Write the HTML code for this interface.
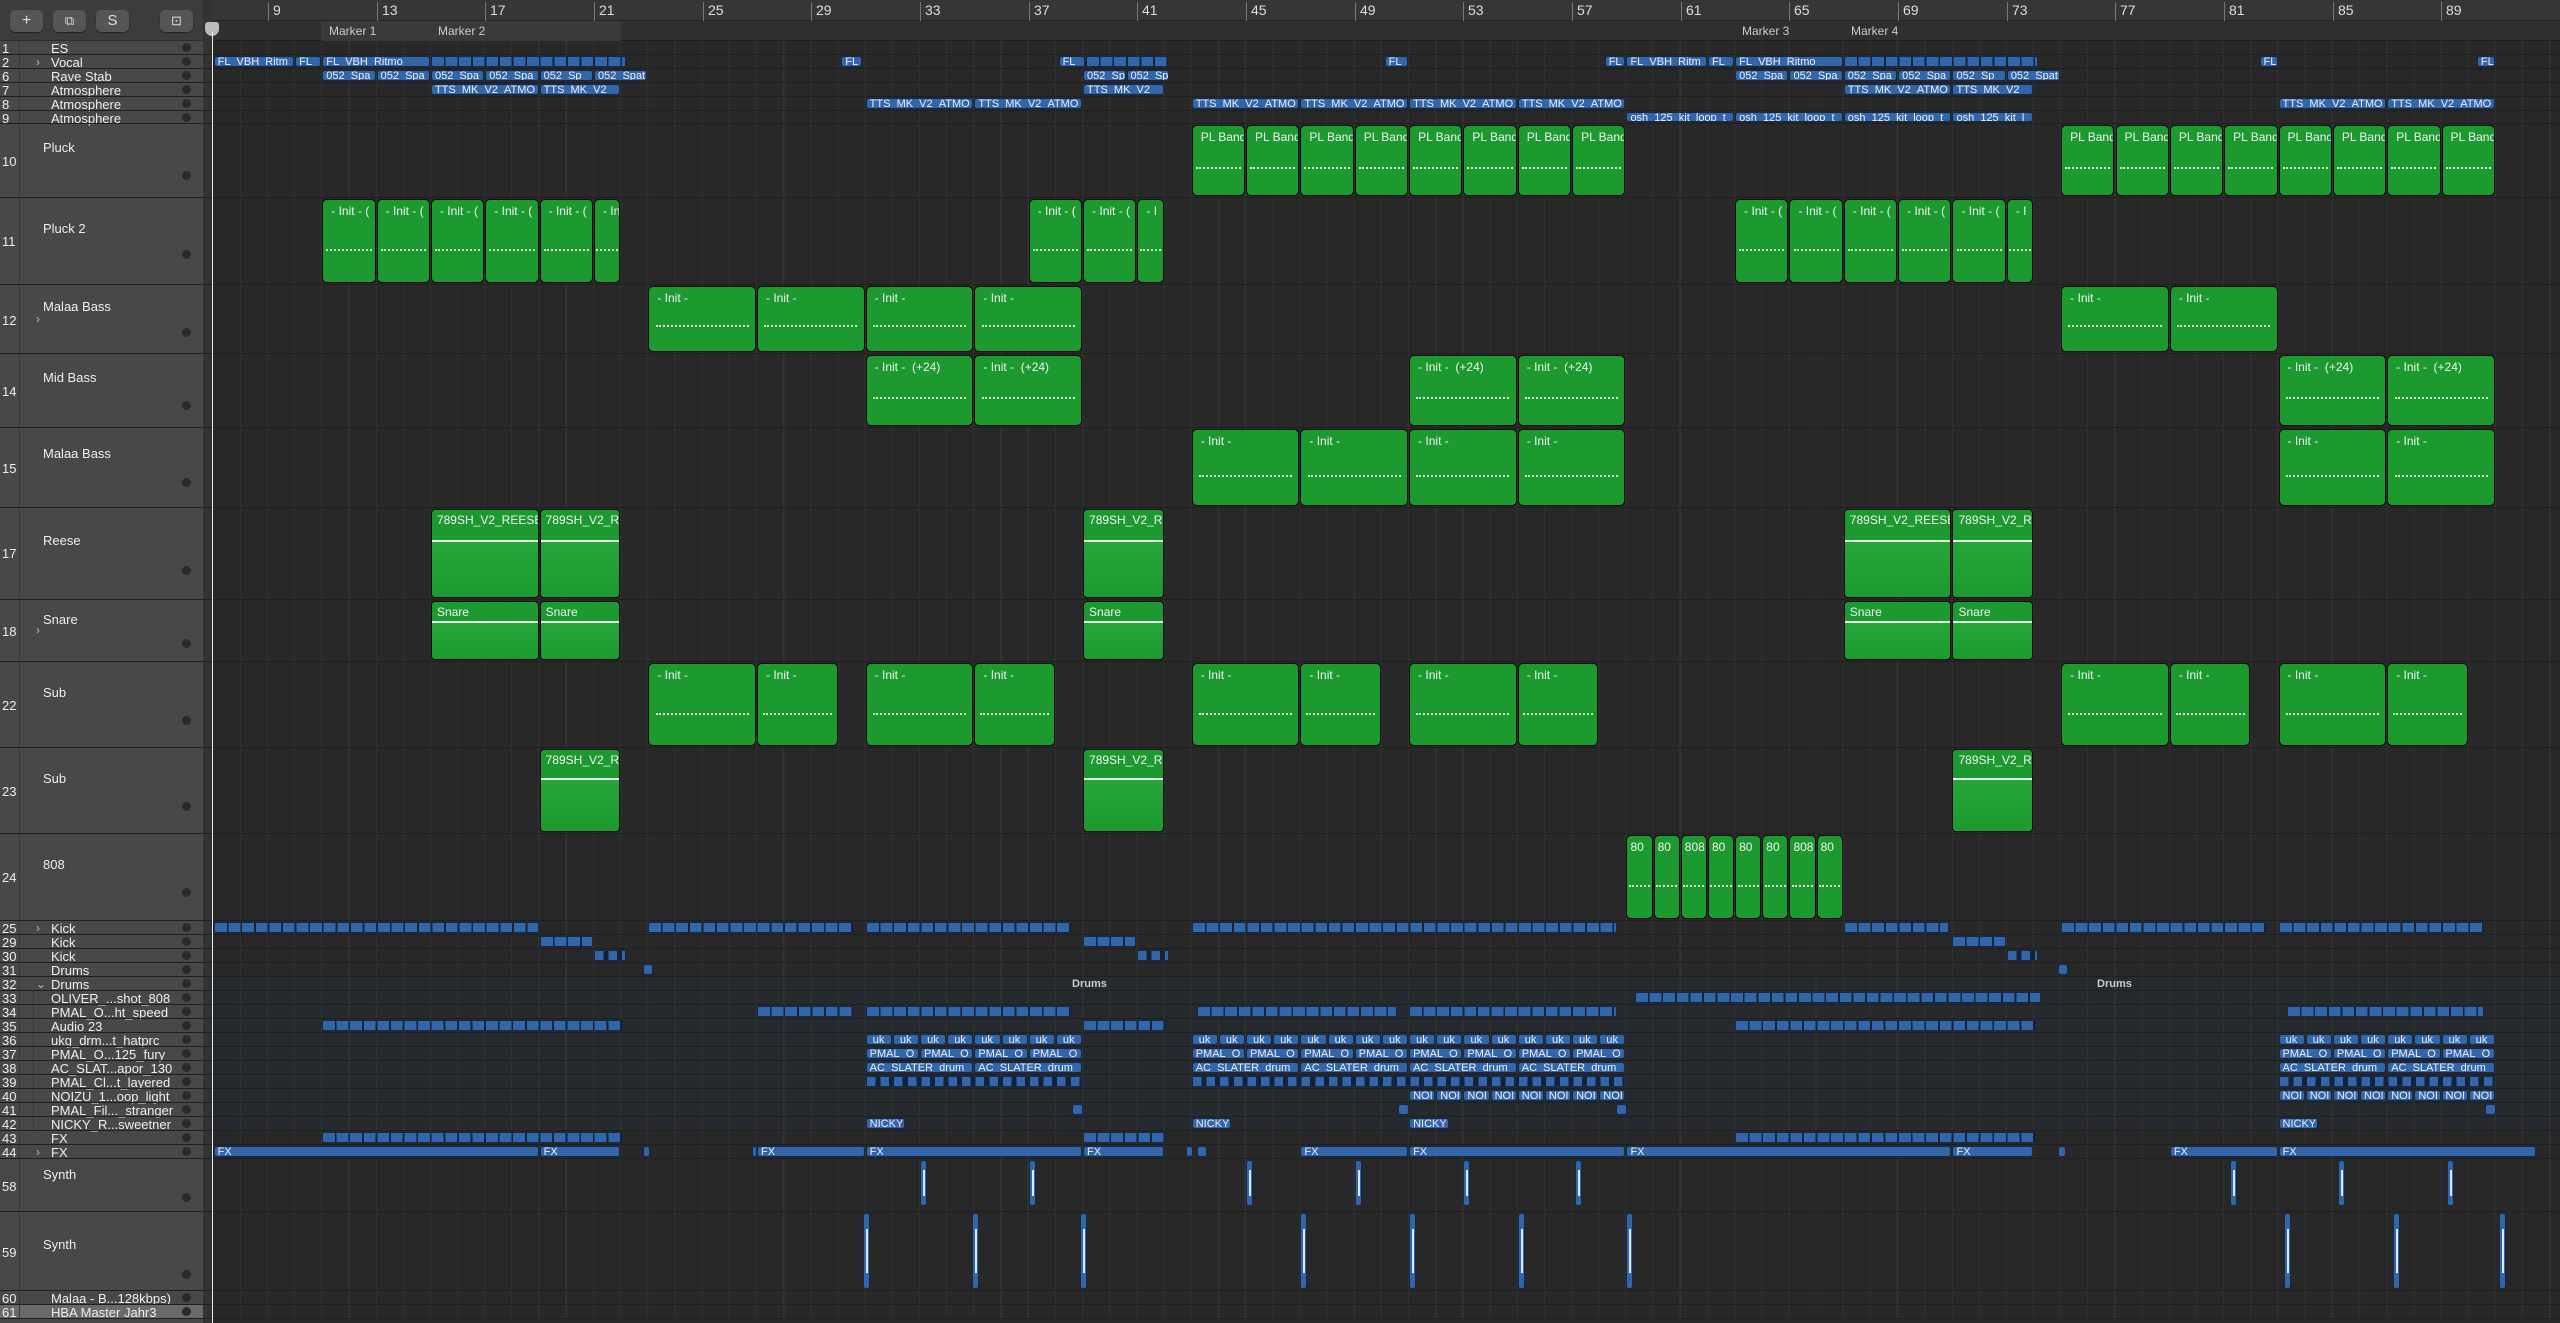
<!DOCTYPE html>
<html><head><meta charset="utf-8">
<style>
*{margin:0;padding:0;box-sizing:border-box}
body{width:2560px;height:1323px;background:#282828;overflow:hidden;font-family:"Liberation Sans",sans-serif;position:relative}
#left{position:absolute;left:0;top:0;width:203px;height:1323px;background:#484848}
#hdr{position:absolute;left:0;top:0;width:203px;height:41px;background:#3c3c3c;border-bottom:1px solid #2e2e2e}
.btn{position:absolute;top:10px;height:22px;width:33px;background:#555;border-radius:5px;color:#ddd;font-size:16px;text-align:center;line-height:22px;box-shadow:0 1px 1px #222}
.tr{position:absolute;left:0;width:203px;border-bottom:1px solid #3a3a3a;color:#eee;font-size:13px}
.tr .n{position:absolute;left:2px;width:18px;text-align:left;border-right:1px solid #3a3a3a;height:100%;top:0}
.tr .nm{position:absolute;left:51px;white-space:nowrap}
.tr .dot{position:absolute;left:182px;width:9px;height:9px;border-radius:50%;background:#2a2a2a}
.tr .ch{position:absolute;left:36px;color:#bbb;font-size:12px}
#div{position:absolute;left:203px;top:0;width:9px;height:1323px;background:#333}
#ruler1{position:absolute;left:212px;top:0;width:2348px;height:21px;background:#363636;border-bottom:1px solid #222}
#ruler2{position:absolute;left:212px;top:21px;width:2348px;height:20px;background:#2f2f2f;border-bottom:1px solid #1e1e1e}
.bn{position:absolute;top:2px;color:#ddd;font-size:14px;padding-left:4px;border-left:1px solid #777;height:19px}
.mk{position:absolute;top:22px;color:#ccc;font-size:12px;padding-left:8px;line-height:18px}
.grid{position:absolute;left:212px;top:41px;width:2348px;height:1278px;background:repeating-linear-gradient(90deg,transparent 0 1.4px,transparent 1.4px 26.17px,#343434 26.17px 27.17px);background-position:1.6px 0}
.row{position:absolute;left:0;width:2560px;border-bottom:1px solid #1f1f1f}
.r{position:absolute;left:calc(213.6px + (var(--b) - 7)*27.17px);width:calc(var(--w)*27.17px - 1px);top:1px;bottom:1px;overflow:hidden;white-space:nowrap;font-size:12px;color:#f2f2f2}
.g{background:#1c9a30;border:1.5px solid #0b0b0b;border-radius:5px;padding:4px 0 0 8px}
.g::after{content:"";position:absolute;left:6%;right:6%;top:60%;border-top:2px dotted rgba(255,255,255,.85)}
.a{background:#1c9a30;border:1.5px solid #0b0b0b;border-radius:4px;padding:3px 0 0 5px}
.a::after{content:"";position:absolute;left:0;right:0;top:34%;bottom:0;border-top:2px solid #e8f5e8;background:linear-gradient(180deg,#26a63a,#1c9a30)}
.bl{background:#3366a8;border:1px solid #142848;border-radius:3px;padding:0 0 0 3px;line-height:11px;font-size:11px;color:#eef}
.st{background:repeating-linear-gradient(90deg,#3366a8 0 11.8px,#13223a 11.8px 13.585px);border:1px solid #142848;border-radius:2px}
.st2{background:repeating-linear-gradient(90deg,#3366a8 0 8.5px,#13223a 8.5px 13.585px);border:1px solid #142848}
.sl{background:#3366a8;border:1px solid #142848;border-radius:3px;width:7px}
.sl::after{content:"";position:absolute;left:2px;top:20%;bottom:20%;width:2px;background:#dde8ff}
</style></head><body>
<div id="left">
<div id="hdr">
<div class="btn" style="left:10px">+</div>
<div class="btn" style="left:53px;font-size:13px">⧉</div>
<div class="btn" style="left:96px;font-size:15px">S</div>
<div class="btn" style="left:160px;font-size:13px">⊡</div>
</div>
<div class="tr" style="top:41px;height:14px"><span class="n">1</span><span class="nm">ES</span><span class="dot" style="top:2px"></span></div>
<div class="tr" style="top:55px;height:14px"><span class="n">2</span><span class="ch">›</span><span class="nm">Vocal</span><span class="dot" style="top:2px"></span></div>
<div class="tr" style="top:69px;height:14px"><span class="n">6</span><span class="nm">Rave Stab</span><span class="dot" style="top:2px"></span></div>
<div class="tr" style="top:83px;height:14px"><span class="n">7</span><span class="nm">Atmosphere</span><span class="dot" style="top:2px"></span></div>
<div class="tr" style="top:97px;height:14px"><span class="n">8</span><span class="nm">Atmosphere</span><span class="dot" style="top:2px"></span></div>
<div class="tr" style="top:111px;height:13px"><span class="n">9</span><span class="nm">Atmosphere</span><span class="dot" style="top:2px"></span></div>
<div class="tr" style="top:124px;height:74px"><span class="n" style="padding-top:30px">10</span><span class="nm" style="left:43px;top:16px">Pluck</span><span class="dot" style="top:47px"></span></div>
<div class="tr" style="top:198px;height:87px"><span class="n" style="padding-top:36px">11</span><span class="nm" style="left:43px;top:23px">Pluck 2</span><span class="dot" style="top:52px"></span></div>
<div class="tr" style="top:285px;height:69px"><span class="n" style="padding-top:28px">12</span><span class="ch" style="top:27px">›</span><span class="nm" style="left:43px;top:14px">Malaa Bass</span><span class="dot" style="top:43px"></span></div>
<div class="tr" style="top:354px;height:74px"><span class="n" style="padding-top:30px">14</span><span class="nm" style="left:43px;top:16px">Mid Bass</span><span class="dot" style="top:47px"></span></div>
<div class="tr" style="top:428px;height:80px"><span class="n" style="padding-top:33px">15</span><span class="nm" style="left:43px;top:18px">Malaa Bass</span><span class="dot" style="top:50px"></span></div>
<div class="tr" style="top:508px;height:92px"><span class="n" style="padding-top:38px">17</span><span class="nm" style="left:43px;top:25px">Reese</span><span class="dot" style="top:58px"></span></div>
<div class="tr" style="top:600px;height:62px"><span class="n" style="padding-top:24px">18</span><span class="ch" style="top:23px">›</span><span class="nm" style="left:43px;top:12px">Snare</span><span class="dot" style="top:39px"></span></div>
<div class="tr" style="top:662px;height:86px"><span class="n" style="padding-top:36px">22</span><span class="nm" style="left:43px;top:23px">Sub</span><span class="dot" style="top:54px"></span></div>
<div class="tr" style="top:748px;height:86px"><span class="n" style="padding-top:36px">23</span><span class="nm" style="left:43px;top:23px">Sub</span><span class="dot" style="top:54px"></span></div>
<div class="tr" style="top:834px;height:87px"><span class="n" style="padding-top:36px">24</span><span class="nm" style="left:43px;top:23px">808</span><span class="dot" style="top:54px"></span></div>
<div class="tr" style="top:921px;height:14px"><span class="n">25</span><span class="ch">›</span><span class="nm">Kick</span><span class="dot" style="top:2px"></span></div>
<div class="tr" style="top:935px;height:14px"><span class="n">29</span><span class="nm">Kick</span><span class="dot" style="top:2px"></span></div>
<div class="tr" style="top:949px;height:14px"><span class="n">30</span><span class="nm">Kick</span><span class="dot" style="top:2px"></span></div>
<div class="tr" style="top:963px;height:14px"><span class="n">31</span><span class="nm">Drums</span><span class="dot" style="top:2px"></span></div>
<div class="tr" style="top:977px;height:14px"><span class="n">32</span><span class="ch">⌄</span><span class="nm">Drums</span><span class="dot" style="top:2px"></span></div>
<div class="tr" style="top:991px;height:14px"><span class="n">33</span><span class="nm">OLIVER_...shot_808</span><span class="dot" style="top:2px"></span></div>
<div class="tr" style="top:1005px;height:14px"><span class="n">34</span><span class="nm">PMAL_O...ht_speed</span><span class="dot" style="top:2px"></span></div>
<div class="tr" style="top:1019px;height:14px"><span class="n">35</span><span class="nm">Audio 23</span><span class="dot" style="top:2px"></span></div>
<div class="tr" style="top:1033px;height:14px"><span class="n">36</span><span class="nm">ukg_drm...t_hatprc</span><span class="dot" style="top:2px"></span></div>
<div class="tr" style="top:1047px;height:14px"><span class="n">37</span><span class="nm">PMAL_O...125_fury</span><span class="dot" style="top:2px"></span></div>
<div class="tr" style="top:1061px;height:14px"><span class="n">38</span><span class="nm">AC_SLAT...apor_130</span><span class="dot" style="top:2px"></span></div>
<div class="tr" style="top:1075px;height:14px"><span class="n">39</span><span class="nm">PMAL_Cl...t_layered</span><span class="dot" style="top:2px"></span></div>
<div class="tr" style="top:1089px;height:14px"><span class="n">40</span><span class="nm">NOIZU_1...oop_light</span><span class="dot" style="top:2px"></span></div>
<div class="tr" style="top:1103px;height:14px"><span class="n">41</span><span class="nm">PMAL_Fil..._stranger</span><span class="dot" style="top:2px"></span></div>
<div class="tr" style="top:1117px;height:14px"><span class="n">42</span><span class="nm">NICKY_R...sweetner</span><span class="dot" style="top:2px"></span></div>
<div style="position:absolute;left:33px;top:991px;width:1px;height:140px;background:#3a3a3a"></div>
<div class="tr" style="top:1131px;height:14px"><span class="n">43</span><span class="nm">FX</span><span class="dot" style="top:2px"></span></div>
<div class="tr" style="top:1145px;height:14px"><span class="n">44</span><span class="ch">›</span><span class="nm">FX</span><span class="dot" style="top:2px"></span></div>
<div class="tr" style="top:1159px;height:53px"><span class="n" style="padding-top:20px">58</span><span class="nm" style="left:43px;top:8px">Synth</span><span class="dot" style="top:34px"></span></div>
<div class="tr" style="top:1212px;height:79px"><span class="n" style="padding-top:33px">59</span><span class="nm" style="left:43px;top:25px">Synth</span><span class="dot" style="top:58px"></span></div>
<div class="tr" style="top:1291px;height:14px"><span class="n">60</span><span class="nm">Malaa - B...128kbps)</span><span class="dot" style="top:2px"></span></div>
<div class="tr" style="top:1305px;height:14px;background:#6a6a6a"><span class="n">61</span><span class="nm">HBA Master Jahr3</span><span class="dot" style="top:2px"></span></div>
</div>
<div id="div"></div>

<div style="position:absolute;left:212px;top:977px;width:2348px;height:154px;background:#262a2e"></div>
<div class="grid"></div>
<div id="ruler1"></div>
<div id="ruler2"></div>
<div style="position:absolute;left:321px;top:21px;width:300px;height:20px;background:#3a3a3a"></div>
<div class="bn" style="left:268px">9</div><div class="bn" style="left:377px">13</div><div class="bn" style="left:485px">17</div><div class="bn" style="left:594px">21</div><div class="bn" style="left:703px">25</div><div class="bn" style="left:811px">29</div><div class="bn" style="left:920px">33</div><div class="bn" style="left:1029px">37</div><div class="bn" style="left:1137px">41</div><div class="bn" style="left:1246px">45</div><div class="bn" style="left:1355px">49</div><div class="bn" style="left:1463px">53</div><div class="bn" style="left:1572px">57</div><div class="bn" style="left:1681px">61</div><div class="bn" style="left:1789px">65</div><div class="bn" style="left:1898px">69</div><div class="bn" style="left:2007px">73</div><div class="bn" style="left:2115px">77</div><div class="bn" style="left:2224px">81</div><div class="bn" style="left:2333px">85</div><div class="bn" style="left:2441px">89</div>
<div class="mk" style="left:321px">Marker 1</div><div class="mk" style="left:430px">Marker 2</div><div class="mk" style="left:1734px">Marker 3</div><div class="mk" style="left:1843px">Marker 4</div>
<div style="position:absolute;left:205px;top:22px;width:14px;height:14px;background:#bbb;border-radius:3px 3px 7px 7px"></div>

<div class="row" style="top:41px;height:14px"></div>
<div class="row" style="top:55px;height:14px">
<div class="r bl" style="--b:7;--w:3">FL_VBH_Ritm</div><div class="r bl" style="--b:10;--w:1">FL</div><div class="r bl" style="--b:11;--w:4">FL_VBH_Ritmo_</div><div class="r st" style="--b:15;--w:7.2"></div>
<div class="r bl" style="--b:30.1;--w:0.8">FL</div><div class="r bl" style="--b:38.1;--w:1">FL</div><div class="r st" style="--b:39.1;--w:3.1"></div>
<div class="r bl" style="--b:50.1;--w:0.9">FL</div><div class="r bl" style="--b:58.2;--w:0.8">FL</div><div class="r bl" style="--b:59;--w:3">FL_VBH_Ritm</div><div class="r bl" style="--b:62;--w:1">FL</div><div class="r bl" style="--b:63;--w:4">FL_VBH_Ritmo_</div><div class="r st" style="--b:67;--w:7.2"></div>
<div class="r bl" style="--b:82.3;--w:0.7">FL</div><div class="r bl" style="--b:90.3;--w:0.7">FL</div>
</div>
<div class="row" style="top:69px;height:14px">
<div class="r bl" style="--b:11;--w:2">052_Spa</div><div class="r bl" style="--b:13;--w:2">052_Spa</div><div class="r bl" style="--b:15;--w:2">052_Spa</div><div class="r bl" style="--b:17;--w:2">052_Spa</div><div class="r bl" style="--b:19;--w:2">052_Sp</div><div class="r bl" style="--b:21;--w:2">052_Spat</div>
<div class="r bl" style="--b:39;--w:1.6">052_Sp</div><div class="r bl" style="--b:40.6;--w:1.6">052_Spa</div>
<div class="r bl" style="--b:63;--w:2">052_Spa</div><div class="r bl" style="--b:65;--w:2">052_Spa</div><div class="r bl" style="--b:67;--w:2">052_Spa</div><div class="r bl" style="--b:69;--w:2">052_Spa</div><div class="r bl" style="--b:71;--w:2">052_Sp</div><div class="r bl" style="--b:73;--w:2">052_Spat</div>
</div>
<div class="row" style="top:83px;height:14px">
<div class="r bl" style="--b:15;--w:4">TTS_MK_V2_ATMO</div><div class="r bl" style="--b:19;--w:3">TTS_MK_V2_</div><div class="r bl" style="--b:39;--w:3">TTS_MK_V2_</div><div class="r bl" style="--b:67;--w:4">TTS_MK_V2_ATMO</div><div class="r bl" style="--b:71;--w:3">TTS_MK_V2_</div>
</div>
<div class="row" style="top:97px;height:14px">
<div class="r bl" style="--b:31;--w:4">TTS_MK_V2_ATMO</div><div class="r bl" style="--b:35;--w:4">TTS_MK_V2_ATMO</div><div class="r bl" style="--b:43;--w:4">TTS_MK_V2_ATMO</div><div class="r bl" style="--b:47;--w:4">TTS_MK_V2_ATMO</div><div class="r bl" style="--b:51;--w:4">TTS_MK_V2_ATMO</div><div class="r bl" style="--b:55;--w:4">TTS_MK_V2_ATMO</div><div class="r bl" style="--b:83;--w:4">TTS_MK_V2_ATMO</div><div class="r bl" style="--b:87;--w:4">TTS_MK_V2_ATMO</div>
</div>
<div class="row" style="top:111px;height:13px">
<div class="r bl" style="--b:59;--w:4">osh_125_kit_loop_t</div><div class="r bl" style="--b:63;--w:4">osh_125_kit_loop_t</div><div class="r bl" style="--b:67;--w:4">osh_125_kit_loop_t</div><div class="r bl" style="--b:71;--w:3">osh_125_kit_l</div>
</div>
<div class="row" style="top:124px;height:74px">
<div class="r g" style="--b:43;--w:2">PL Bandi</div><div class="r g" style="--b:45;--w:2">PL Bandi</div><div class="r g" style="--b:47;--w:2">PL Bandi</div><div class="r g" style="--b:49;--w:2">PL Bandi</div><div class="r g" style="--b:51;--w:2">PL Bandi</div><div class="r g" style="--b:53;--w:2">PL Bandi</div><div class="r g" style="--b:55;--w:2">PL Bandi</div><div class="r g" style="--b:57;--w:2">PL Bandi</div>
<div class="r g" style="--b:75;--w:2">PL Bandi</div><div class="r g" style="--b:77;--w:2">PL Bandi</div><div class="r g" style="--b:79;--w:2">PL Bandi</div><div class="r g" style="--b:81;--w:2">PL Bandi</div><div class="r g" style="--b:83;--w:2">PL Bandi</div><div class="r g" style="--b:85;--w:2">PL Bandi</div><div class="r g" style="--b:87;--w:2">PL Bandi</div><div class="r g" style="--b:89;--w:2">PL Bandi</div>
</div>
<div class="row" style="top:198px;height:87px">
<div class="r g" style="--b:11;--w:2">- Init - (</div><div class="r g" style="--b:13;--w:2">- Init - (</div><div class="r g" style="--b:15;--w:2">- Init - (</div><div class="r g" style="--b:17;--w:2">- Init - (</div><div class="r g" style="--b:19;--w:2">- Init - (</div><div class="r g" style="--b:21;--w:1">- In</div>
<div class="r g" style="--b:37;--w:2">- Init - (</div><div class="r g" style="--b:39;--w:2">- Init - (</div><div class="r g" style="--b:41;--w:1">- I</div>
<div class="r g" style="--b:63;--w:2">- Init - (</div><div class="r g" style="--b:65;--w:2">- Init - (</div><div class="r g" style="--b:67;--w:2">- Init - (</div><div class="r g" style="--b:69;--w:2">- Init - (</div><div class="r g" style="--b:71;--w:2">- Init - (</div><div class="r g" style="--b:73;--w:1">- I</div>
</div>
<div class="row" style="top:285px;height:69px">
<div class="r g" style="--b:23;--w:4">- Init -</div><div class="r g" style="--b:27;--w:4">- Init -</div><div class="r g" style="--b:31;--w:4">- Init -</div><div class="r g" style="--b:35;--w:4">- Init -</div><div class="r g" style="--b:75;--w:4">- Init -</div><div class="r g" style="--b:79;--w:4">- Init -</div>
</div>
<div class="row" style="top:354px;height:74px">
<div class="r g" style="--b:31;--w:4">- Init -&nbsp; (+24)</div><div class="r g" style="--b:35;--w:4">- Init -&nbsp; (+24)</div><div class="r g" style="--b:51;--w:4">- Init -&nbsp; (+24)</div><div class="r g" style="--b:55;--w:4">- Init -&nbsp; (+24)</div><div class="r g" style="--b:83;--w:4">- Init -&nbsp; (+24)</div><div class="r g" style="--b:87;--w:4">- Init -&nbsp; (+24)</div>
</div>
<div class="row" style="top:428px;height:80px">
<div class="r g" style="--b:43;--w:4">- Init -</div><div class="r g" style="--b:47;--w:4">- Init -</div><div class="r g" style="--b:51;--w:4">- Init -</div><div class="r g" style="--b:55;--w:4">- Init -</div><div class="r g" style="--b:83;--w:4">- Init -</div><div class="r g" style="--b:87;--w:4">- Init -</div>
</div>
<div class="row" style="top:508px;height:92px">
<div class="r a" style="--b:15;--w:4">789SH_V2_REESE_</div><div class="r a" style="--b:19;--w:3">789SH_V2_RE</div><div class="r a" style="--b:39;--w:3">789SH_V2_RE</div><div class="r a" style="--b:67;--w:4">789SH_V2_REESE_</div><div class="r a" style="--b:71;--w:3">789SH_V2_RE</div>
</div>
<div class="row" style="top:600px;height:62px">
<div class="r a" style="--b:15;--w:4">Snare</div><div class="r a" style="--b:19;--w:3">Snare</div><div class="r a" style="--b:39;--w:3">Snare</div><div class="r a" style="--b:67;--w:4">Snare</div><div class="r a" style="--b:71;--w:3">Snare</div>
</div>
<div class="row" style="top:662px;height:86px">
<div class="r g" style="--b:23;--w:4">- Init -</div><div class="r g" style="--b:27;--w:3">- Init -</div><div class="r g" style="--b:31;--w:4">- Init -</div><div class="r g" style="--b:35;--w:3">- Init -</div><div class="r g" style="--b:43;--w:4">- Init -</div><div class="r g" style="--b:47;--w:3">- Init -</div><div class="r g" style="--b:51;--w:4">- Init -</div><div class="r g" style="--b:55;--w:3">- Init -</div><div class="r g" style="--b:75;--w:4">- Init -</div><div class="r g" style="--b:79;--w:3">- Init -</div><div class="r g" style="--b:83;--w:4">- Init -</div><div class="r g" style="--b:87;--w:3">- Init -</div>
</div>
<div class="row" style="top:748px;height:86px">
<div class="r a" style="--b:19;--w:3">789SH_V2_RE</div><div class="r a" style="--b:39;--w:3">789SH_V2_RE</div><div class="r a" style="--b:71;--w:3">789SH_V2_RE</div>
</div>
<div class="row" style="top:834px;height:87px">
<div class="r g" style="--b:59;--w:1;padding-left:3px">80</div><div class="r g" style="--b:60;--w:1;padding-left:3px">80</div><div class="r g" style="--b:61;--w:1;padding-left:3px">808</div><div class="r g" style="--b:62;--w:1;padding-left:3px">80</div><div class="r g" style="--b:63;--w:1;padding-left:3px">80</div><div class="r g" style="--b:64;--w:1;padding-left:3px">80</div><div class="r g" style="--b:65;--w:1;padding-left:3px">808</div><div class="r g" style="--b:66;--w:1;padding-left:3px">80</div>
</div>
<div class="row" style="top:921px;height:14px">
<div class="r st" style="--b:7;--w:12"></div><div class="r st" style="--b:23;--w:7.6"></div><div class="r st" style="--b:31;--w:7.6"></div><div class="r st" style="--b:43;--w:15.7"></div><div class="r st" style="--b:67;--w:3.9"></div><div class="r st" style="--b:75;--w:7.6"></div><div class="r st" style="--b:83;--w:7.6"></div>
</div>
<div class="row" style="top:935px;height:14px">
<div class="r st" style="--b:19;--w:2"></div><div class="r st" style="--b:39;--w:2"></div><div class="r st" style="--b:71;--w:2"></div>
</div>
<div class="row" style="top:949px;height:14px">
<div class="r st2" style="--b:21;--w:1.2"></div><div class="r st2" style="--b:41;--w:1.2"></div><div class="r st2" style="--b:73;--w:1.2"></div>
</div>
<div class="row" style="top:963px;height:14px">
<div class="r bl" style="--b:22.8;--w:0.4"></div><div class="r bl" style="--b:74.9;--w:0.4"></div>
</div>
<div class="row" style="top:977px;height:14px">
<div style="position:absolute;left:1072px;top:1px;font-size:11px;font-weight:bold;color:#ccc">Drums</div><div style="position:absolute;left:2097px;top:1px;font-size:11px;font-weight:bold;color:#ccc">Drums</div>
</div>
<div class="row" style="top:991px;height:14px"><div class="r st" style="--b:59.3;--w:15"></div></div>
<div class="row" style="top:1005px;height:14px">
<div class="r st" style="--b:27;--w:3.6"></div><div class="r st" style="--b:31;--w:7.6"></div><div class="r st" style="--b:43.2;--w:7.4"></div><div class="r st" style="--b:51;--w:7.7"></div><div class="r st" style="--b:83.3;--w:7.3"></div>
</div>
<div class="row" style="top:1019px;height:14px">
<div class="r st" style="--b:11;--w:11.1"></div><div class="r st" style="--b:39;--w:3.1"></div><div class="r st" style="--b:63;--w:11.1"></div>
</div>
<div class="row" style="top:1033px;height:14px">
<div class="r bl" style="--b:31;--w:1">&nbsp;uk</div><div class="r bl" style="--b:32;--w:1">&nbsp;uk</div><div class="r bl" style="--b:33;--w:1">&nbsp;uk</div><div class="r bl" style="--b:34;--w:1">&nbsp;uk</div><div class="r bl" style="--b:35;--w:1">&nbsp;uk</div><div class="r bl" style="--b:36;--w:1">&nbsp;uk</div><div class="r bl" style="--b:37;--w:1">&nbsp;uk</div><div class="r bl" style="--b:38;--w:1">&nbsp;uk</div>
<div class="r bl" style="--b:43;--w:1">&nbsp;uk</div><div class="r bl" style="--b:44;--w:1">&nbsp;uk</div><div class="r bl" style="--b:45;--w:1">&nbsp;uk</div><div class="r bl" style="--b:46;--w:1">&nbsp;uk</div><div class="r bl" style="--b:47;--w:1">&nbsp;uk</div><div class="r bl" style="--b:48;--w:1">&nbsp;uk</div><div class="r bl" style="--b:49;--w:1">&nbsp;uk</div><div class="r bl" style="--b:50;--w:1">&nbsp;uk</div><div class="r bl" style="--b:51;--w:1">&nbsp;uk</div><div class="r bl" style="--b:52;--w:1">&nbsp;uk</div><div class="r bl" style="--b:53;--w:1">&nbsp;uk</div><div class="r bl" style="--b:54;--w:1">&nbsp;uk</div><div class="r bl" style="--b:55;--w:1">&nbsp;uk</div><div class="r bl" style="--b:56;--w:1">&nbsp;uk</div><div class="r bl" style="--b:57;--w:1">&nbsp;uk</div><div class="r bl" style="--b:58;--w:1">&nbsp;uk</div>
<div class="r bl" style="--b:83;--w:1">&nbsp;uk</div><div class="r bl" style="--b:84;--w:1">&nbsp;uk</div><div class="r bl" style="--b:85;--w:1">&nbsp;uk</div><div class="r bl" style="--b:86;--w:1">&nbsp;uk</div><div class="r bl" style="--b:87;--w:1">&nbsp;uk</div><div class="r bl" style="--b:88;--w:1">&nbsp;uk</div><div class="r bl" style="--b:89;--w:1">&nbsp;uk</div><div class="r bl" style="--b:90;--w:1">&nbsp;uk</div>
</div>
<div class="row" style="top:1047px;height:14px">
<div class="r bl" style="--b:31;--w:2">PMAL_O</div><div class="r bl" style="--b:33;--w:2">PMAL_O</div><div class="r bl" style="--b:35;--w:2">PMAL_O</div><div class="r bl" style="--b:37;--w:2">PMAL_O</div>
<div class="r bl" style="--b:43;--w:2">PMAL_O</div><div class="r bl" style="--b:45;--w:2">PMAL_O</div><div class="r bl" style="--b:47;--w:2">PMAL_O</div><div class="r bl" style="--b:49;--w:2">PMAL_O</div><div class="r bl" style="--b:51;--w:2">PMAL_O</div><div class="r bl" style="--b:53;--w:2">PMAL_O</div><div class="r bl" style="--b:55;--w:2">PMAL_O</div><div class="r bl" style="--b:57;--w:2">PMAL_O</div>
<div class="r bl" style="--b:83;--w:2">PMAL_O</div><div class="r bl" style="--b:85;--w:2">PMAL_O</div><div class="r bl" style="--b:87;--w:2">PMAL_O</div><div class="r bl" style="--b:89;--w:2">PMAL_O</div>
</div>
<div class="row" style="top:1061px;height:14px">
<div class="r bl" style="--b:31;--w:4">AC_SLATER_drum_</div><div class="r bl" style="--b:35;--w:4">AC_SLATER_drum_</div><div class="r bl" style="--b:43;--w:4">AC_SLATER_drum_</div><div class="r bl" style="--b:47;--w:4">AC_SLATER_drum_</div><div class="r bl" style="--b:51;--w:4">AC_SLATER_drum_</div><div class="r bl" style="--b:55;--w:4">AC_SLATER_drum_</div><div class="r bl" style="--b:83;--w:4">AC_SLATER_drum_</div><div class="r bl" style="--b:87;--w:4">AC_SLATER_drum_</div>
</div>
<div class="row" style="top:1075px;height:14px">
<div class="r st2" style="--b:31;--w:8"></div><div class="r st2" style="--b:43;--w:16"></div><div class="r st2" style="--b:83;--w:8"></div>
</div>
<div class="row" style="top:1089px;height:14px">
<div class="r bl" style="--b:51;--w:1">NOI</div><div class="r bl" style="--b:52;--w:1">NOI</div><div class="r bl" style="--b:53;--w:1">NOI</div><div class="r bl" style="--b:54;--w:1">NOI</div><div class="r bl" style="--b:55;--w:1">NOI</div><div class="r bl" style="--b:56;--w:1">NOI</div><div class="r bl" style="--b:57;--w:1">NOI</div><div class="r bl" style="--b:58;--w:1">NOI</div>
<div class="r bl" style="--b:83;--w:1">NOI</div><div class="r bl" style="--b:84;--w:1">NOI</div><div class="r bl" style="--b:85;--w:1">NOI</div><div class="r bl" style="--b:86;--w:1">NOI</div><div class="r bl" style="--b:87;--w:1">NOI</div><div class="r bl" style="--b:88;--w:1">NOI</div><div class="r bl" style="--b:89;--w:1">NOI</div><div class="r bl" style="--b:90;--w:1">NOI</div>
</div>
<div class="row" style="top:1103px;height:14px">
<div class="r bl" style="--b:38.6;--w:0.45"></div><div class="r bl" style="--b:50.6;--w:0.45"></div><div class="r bl" style="--b:58.6;--w:0.45"></div><div class="r bl" style="--b:90.6;--w:0.45"></div>
</div>
<div class="row" style="top:1117px;height:14px">
<div class="r bl" style="--b:31;--w:1.5">NICKY</div><div class="r bl" style="--b:43;--w:1.5">NICKY</div><div class="r bl" style="--b:51;--w:1.5">NICKY</div><div class="r bl" style="--b:83;--w:1.5">NICKY</div>
</div>
<div class="row" style="top:1131px;height:14px">
<div class="r st" style="--b:11;--w:11.1"></div><div class="r st" style="--b:39;--w:3.1"></div><div class="r st" style="--b:63;--w:11.1"></div>
</div>
<div class="row" style="top:1145px;height:14px">
<div class="r bl" style="--b:7;--w:12">FX</div><div class="r bl" style="--b:19;--w:3">FX</div><div class="r bl" style="--b:22.8;--w:0.3"></div><div class="r bl" style="--b:26.8;--w:0.25"></div><div class="r bl" style="--b:27;--w:4">FX</div><div class="r bl" style="--b:31;--w:8">FX</div><div class="r bl" style="--b:39;--w:3">FX</div><div class="r bl" style="--b:42.8;--w:0.3"></div><div class="r bl" style="--b:43.2;--w:0.4"></div><div class="r bl" style="--b:47;--w:4">FX</div><div class="r bl" style="--b:51;--w:8">FX</div><div class="r bl" style="--b:59;--w:12">FX</div><div class="r bl" style="--b:71;--w:3">FX</div><div class="r bl" style="--b:74.9;--w:0.3"></div><div class="r bl" style="--b:79;--w:4">FX</div><div class="r bl" style="--b:83;--w:9.5">FX</div>
</div>
<div class="row" style="top:1159px;height:53px">
<div class="r sl" style="--b:33;top:1px;bottom:5px"></div><div class="r sl" style="--b:37;top:1px;bottom:5px"></div><div class="r sl" style="--b:45;top:1px;bottom:5px"></div><div class="r sl" style="--b:49;top:1px;bottom:5px"></div><div class="r sl" style="--b:53;top:1px;bottom:5px"></div><div class="r sl" style="--b:57.1;top:1px;bottom:5px"></div><div class="r sl" style="--b:81.2;top:1px;bottom:5px"></div><div class="r sl" style="--b:85.2;top:1px;bottom:5px"></div><div class="r sl" style="--b:89.2;top:1px;bottom:5px"></div>
</div>
<div class="row" style="top:1212px;height:79px">
<div class="r sl" style="--b:30.9"></div><div class="r sl" style="--b:34.9"></div><div class="r sl" style="--b:38.9"></div><div class="r sl" style="--b:47"></div><div class="r sl" style="--b:51"></div><div class="r sl" style="--b:55"></div><div class="r sl" style="--b:59"></div><div class="r sl" style="--b:83.2"></div><div class="r sl" style="--b:87.2"></div><div class="r sl" style="--b:91.1"></div>
</div>
<div class="row" style="top:1291px;height:14px"></div>
<div class="row" style="top:1305px;height:14px"></div>
<div style="position:absolute;left:212px;top:32px;width:1px;height:1291px;background:#e8e8e8"></div>
</body></html>
